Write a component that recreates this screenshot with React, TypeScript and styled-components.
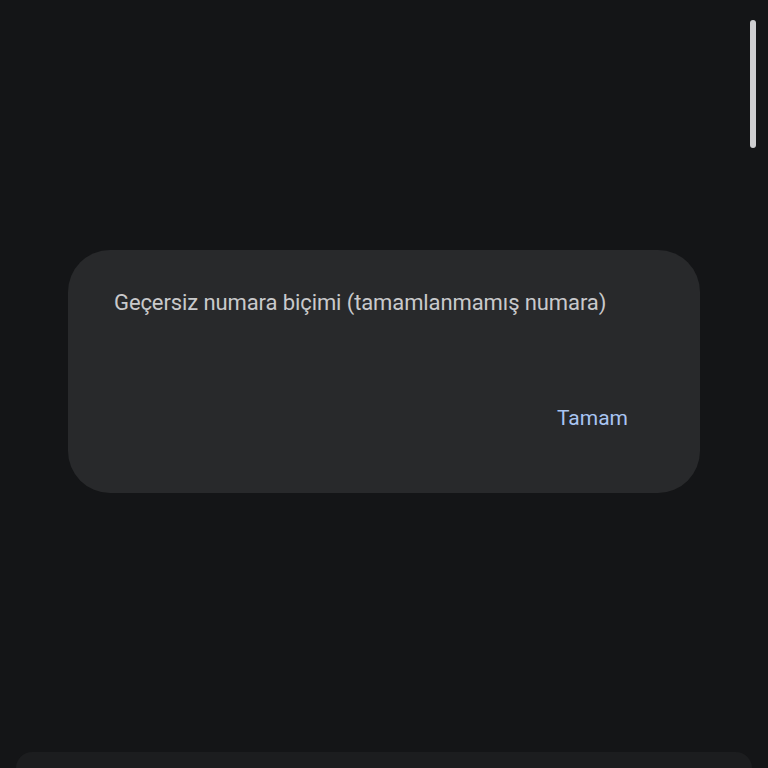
import React from 'react'
import styled, { createGlobalStyle } from 'styled-components'

const Global = createGlobalStyle`
  html, body {
    margin: 0;
    padding: 0;
    background: #141517;
  }
  * { box-sizing: border-box; }
`

const App = () => {
  return (
    <>
      <Global />
      <Screen>
        <Dialog>
          <Message>Geçersiz numara biçimi (tamamlanmamış numara)</Message>
          <Actions>
            <TextButton>Tamam</TextButton>
          </Actions>
        </Dialog>
        <Sheet />
        <Scrollbar />
      </Screen>
    </>
  )
}

export default App

const Screen = styled.div`
position: relative;
width: 768px;
height: 768px;
overflow: hidden;
background: #141517;
display: flex;
flex-direction: column;
align-items: center;
padding-top: 250px;
font-family: Roboto, "Noto Sans", sans-serif;
`
const Dialog = styled.div`
width: 632px;
height: 243px;
border-radius: 42px;
background: #28292b;
padding: 39px 46px 0 46px;
display: flex;
flex-direction: column;
`
const Message = styled.div`
font-size: 22px;
line-height: 28px;
color: #c9c9cb;
letter-spacing: -0.1px;
`
const Actions = styled.div`
display: flex;
justify-content: flex-end;
margin-top: 87px;
padding-right: 26px;
`
const TextButton = styled.div`
font-size: 21px;
line-height: 28px;
color: #a8c4f2;
`
const Sheet = styled.div`
margin-top: auto;
width: 736px;
height: 16px;
border-radius: 40px 40px 0 0;
background: #1c1d1f;
`
const Scrollbar = styled.div`
position: absolute;
top: 20px;
right: 12px;
width: 6px;
height: 128px;
border-radius: 3px;
background: #cfcfd1;
`
